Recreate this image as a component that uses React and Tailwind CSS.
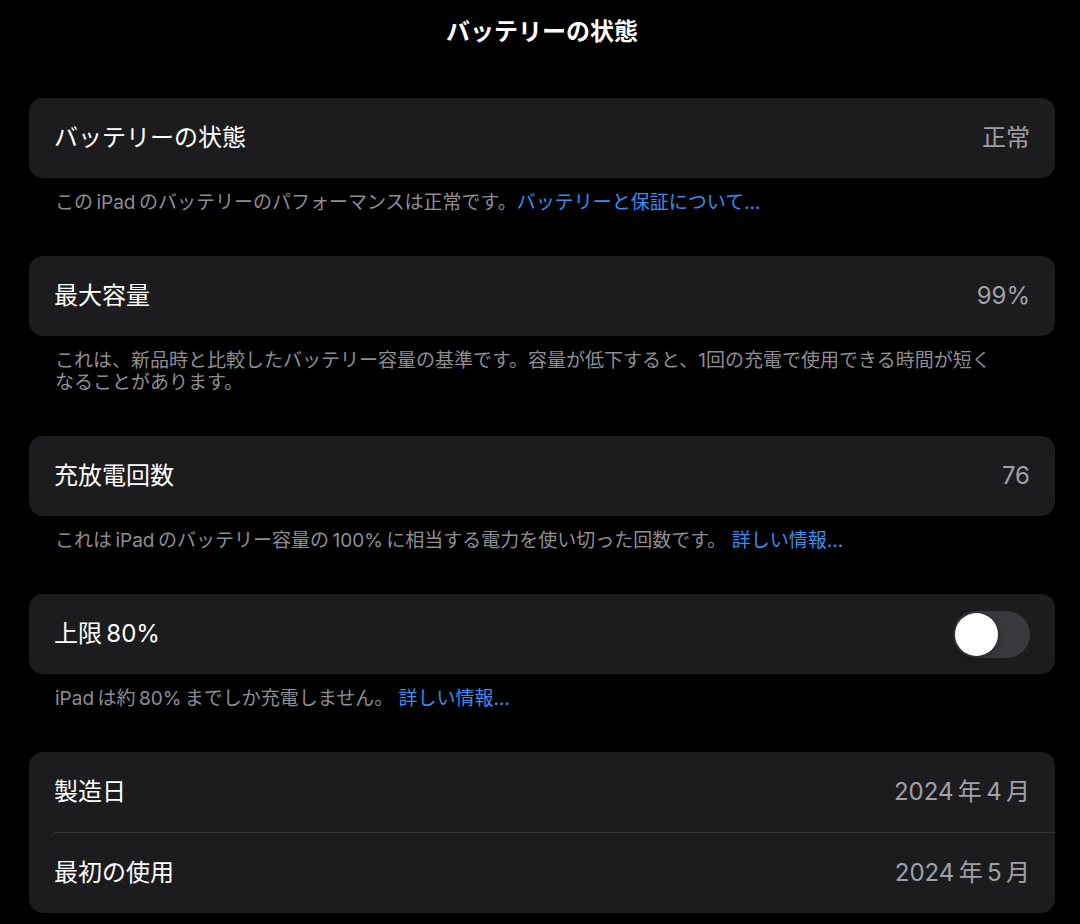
import React from "react";

const font = {
  fontFamily: '"Inter", "Noto Sans CJK JP", "Noto Sans", sans-serif',
};

const Row = ({ label, value, children }) => (
  <div className="h-[80px] px-[25px] flex items-center justify-between">
    <span className="text-[24px] text-white">{label}</span>
    {value && <span className="text-[24px] text-[#a1a1a6]">{value}</span>}
    {children}
  </div>
);

const Card = ({ children }) => (
  <div className="bg-[#1c1c1e] rounded-[14px] overflow-hidden">{children}</div>
);

const Footer = ({ children }) => (
  <p className="px-[26px] pt-[14px] pb-[42px] text-[19px] leading-[22px] text-[#8e8e93]">
    {children}
  </p>
);

const Link = ({ children }) => (
  <span className="text-[#3a8ef0]">{children}</span>
);

const Toggle = () => (
  <div className="w-[77px] h-[47px] rounded-full bg-[#39393d] p-[2px] flex items-center">
    <div className="w-[43px] h-[43px] rounded-full bg-white shadow-[0_2px_6px_rgba(0,0,0,0.35)]" />
  </div>
);

export default function App() {
  return (
    <div className="min-h-screen bg-black pl-[29px] pr-[25px]" style={font}>
      {/* Header */}
      <div className="h-[64px] flex items-center justify-center">
        <h1 className="text-[24px] font-bold text-white">バッテリーの状態</h1>
      </div>

      <div className="pt-[34px]">
        <Card>
          <Row label="バッテリーの状態" value="正常" />
        </Card>
        <Footer>
          この{"\u2009"}iPad{"\u2009"}のバッテリーのパフォーマンスは正常です。<Link>バッテリーと保証について...</Link>
        </Footer>

        <Card>
          <Row label="最大容量" value="99%" />
        </Card>
        <Footer>
          これは、新品時と比較したバッテリー容量の基準です。容量が低下すると、1回の充電で使用できる時間が短く
          <br />
          なることがあります。
        </Footer>

        <Card>
          <Row label="充放電回数" value="76" />
        </Card>
        <Footer>
          これは{"\u2009"}iPad{"\u2009"}のバッテリー容量の{"\u2009"}100%{"\u2009"}に相当する電力を使い切った回数です。 <Link>詳しい情報...</Link>
        </Footer>

        <Card>
          <Row label={"上限\u200980%"}>
            <Toggle />
          </Row>
        </Card>
        <Footer>
          iPad{"\u2009"}は約{"\u2009"}80%{"\u2009"}までしか充電しません。 <Link>詳しい情報...</Link>
        </Footer>

        <Card>
          <Row label="製造日" value={"2024\u2009年\u20094\u2009月"} />
          <div className="ml-[25px] h-px bg-[#38383a]" />
          <Row label="最初の使用" value={"2024\u2009年\u20095\u2009月"} />
        </Card>
      </div>
    </div>
  );
}
